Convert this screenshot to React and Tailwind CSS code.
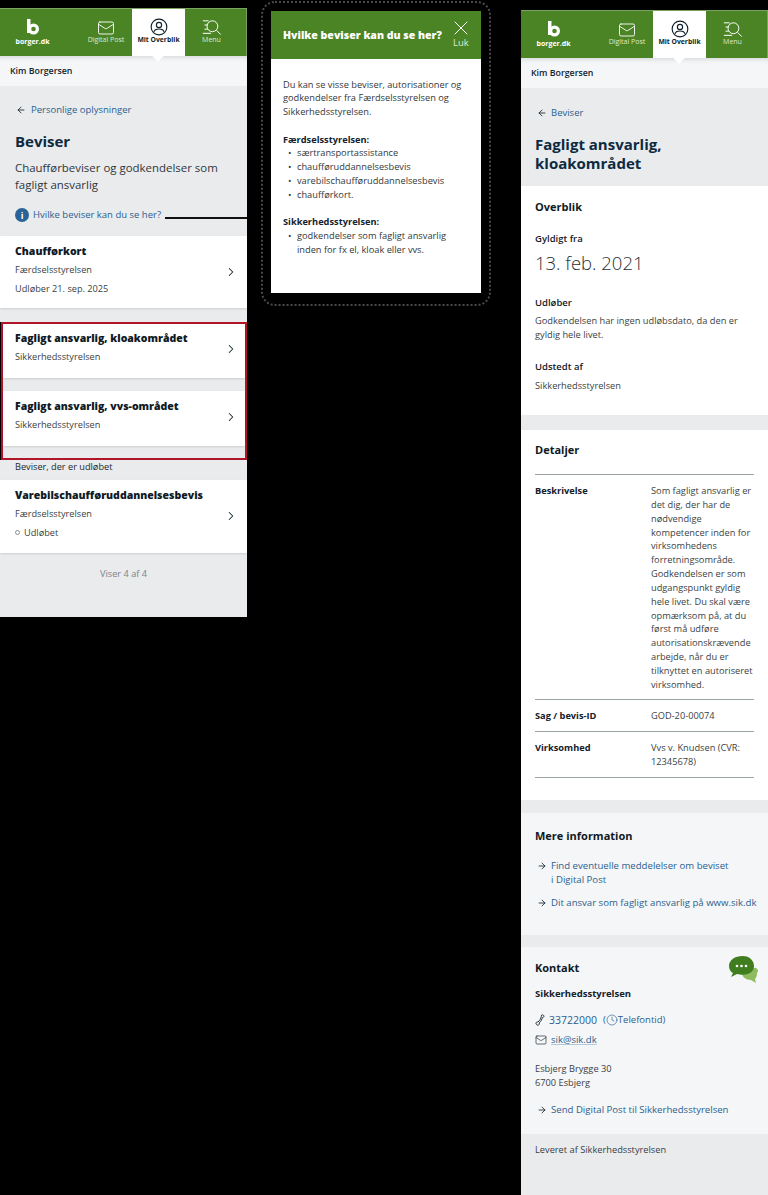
import { ArrowLeft, ArrowRight, ChevronRight, X, Mail, Clock } from 'lucide-react';

function LogoMark() {
  return (
    <svg width="12" height="16" viewBox="0 0 12 16" fill="none">
      <path d="M1.750 0v14" stroke="white" strokeWidth="3.500" />
      <circle cx="6.500" cy="10" r="3.900" stroke="white" strokeWidth="3.200" />
    </svg>
  );
}

function MenuSearchIcon() {
  return (
    <svg width="20" height="17" viewBox="0 0 24 20" fill="none" stroke="white" strokeWidth="1.2">
      <path d="M1 2h7M3 7h4M3 12h4M1 17h10" />
      <circle cx="12.5" cy="8.5" r="6.5" />
      <path d="M17.5 13.5l5 5" />
    </svg>
  );
}

function UserCircleIcon() {
  return (
    <svg width="18" height="18" viewBox="0 0 22 22" fill="none" stroke="#0f1f2b" strokeWidth="1.4">
      <circle cx="11" cy="11" r="9.6" />
      <circle cx="11" cy="8.6" r="3.2" />
      <path d="M4.8 17c.6-2.6 2.4-3.6 6.2-3.6s5.600 1 6.200 3.600" />
    </svg>
  );
}

function HandsetIcon() {
  return (
    <svg width="10" height="12" viewBox="0 0 10 12" fill="none" stroke="#12232f" strokeWidth="0.9" className="mr-[4px]">
      <path d="M6.500 1.200c.8-.6 1.900-.3 2.300.5.300.6.100 1.300-.5 1.600l-.9.300c-.4 1.600-1.600 4-3.200 5.300l.2 1c-.1.800-1 1.300-1.900 1.200C1.500 10.900.8 10 1 9c.2-.8 1-1.200 1.900-1 1.800-1.200 3-3.600 3.400-5.400z" />
    </svg>
  );
}

function Header() {
  return (
    <div className="flex h-[48px] bg-[#4b8425] border-t border-t-[#7ba35f] border-r border-r-[#7ba35f]">
      <div className="flex w-[63px] ml-[1px] flex-col items-center pt-[10px] text-white">
        <LogoMark />
        <span className="mt-[2px] text-[7px] leading-[9px] font-bold">borger.dk</span>
      </div>
      <div className="flex w-[68px] flex-col items-center pl-[16px] pt-[10px] text-[#dfeacf]">
        <Mail size={18} strokeWidth={1.2} color="white" />
        <span className="-mt-[2px] whitespace-nowrap text-[7px] leading-[9px]">Digital Post</span>
      </div>
      <div className="relative flex w-[53px] flex-col items-center bg-white pt-[9px]">
        <UserCircleIcon />
        <span className="relative z-10 -mt-[1px] whitespace-nowrap text-[6.8px] leading-[9px] font-bold text-[#0f1f2b]">Mit Overblik</span>
        <div className="absolute -bottom-[4px] left-[22px] h-[8px] w-[8px] rotate-45 bg-white" />
      </div>
      <div className="flex flex-1 flex-col items-center pr-[8px] pt-[10px] text-[#dfeacf]">
        <MenuSearchIcon />
        <span className="-mt-[1px] text-[7px] leading-[9px]">Menu</span>
      </div>
    </div>
  );
}

function NameBar() {
  return (
    <div className="h-[30px] bg-[#f5f6f7] pl-[10px] pt-[8px] text-[8.8px] leading-[14px] font-semibold text-[#12232f] shadow-[inset_0_5px_5px_-4px_rgba(0,0,0,0.15)]">
      Kim Borgersen
    </div>
  );
}

function CardRow({ title, sub, extra, dot, height, arrowClass, padClass = 'pl-[15px] pt-[7px]' }) {
  return (
    <div className={`relative bg-white shadow-[0_1px_2px_rgba(0,0,0,0.12)] ${padClass} ${height}`}>
      <div className="text-[10.5px] leading-[16px] font-extrabold text-[#0f1a24]">{title}</div>
      <div className="mt-[4px] text-[9.2px] leading-[14px] text-[#3a3f44]">{sub}</div>
      {extra && (
        <div className="mt-[4.500px] flex items-center text-[9.2px] leading-[14px] text-[#3a3f44]">
          {dot && <span className="mr-[4px] h-[5px] w-[5px] rounded-full border border-[#8a8f93]" />}
          {extra}
        </div>
      )}
      <ChevronRight size={14} strokeWidth={1.8} color="#1a2730" className={`absolute ${arrowClass}`} />
    </div>
  );
}

function LeftScreen() {
  return (
    <div className="mt-[8px] w-[247px] shrink-0">
      <Header />
      <NameBar />
      <div className="relative h-[149px] bg-[#e9ebed] px-[15px] pt-[17px]">
        <div className="flex items-center text-[#2b5f8e]">
          <ArrowLeft size={10} strokeWidth={2} color="#12232f" className="ml-[1px] mr-[5px]" />
          <span className="text-[9.5px] leading-[14px] font-medium">Personlige oplysninger</span>
        </div>
        <h1 className="mt-[13px] text-[15px] leading-[22px] font-bold text-[#0d2a3f]">Beviser</h1>
        <p className="mt-[7px] text-[11.45px] leading-[17px] text-[#30363b]">Chaufførbeviser og godkendelser som fagligt ansvarlig</p>
        <div className="mt-[15px] flex items-center">
          <span className="mr-[4px] flex h-[14px] w-[14px] items-center justify-center rounded-full bg-[#2a6398] text-[9px] leading-none font-bold text-white">i</span>
          <span className="text-[9.5px] leading-[14px] font-medium text-[#2b5f8e]">Hvilke beviser kan du se her?</span>
        </div>
        <div className="absolute left-[165px] top-[131px] h-[1.500px] w-[82px] bg-[#111]" />
      </div>
      <div className="bg-[#e9ebed] pt-[1px]">
        <CardRow title="Chaufførkort" sub="Færdselsstyrelsen" extra="Udløber 21. sep. 2025" height="h-[72px]" arrowClass="right-[9px] top-[29px]" />
      </div>
      <div className="h-[14px] bg-[#e9ebed]" />
      <div className="border-2 border-[#b2142a] bg-[#e9ebed] ml-[1px] h-[138px]">
        <CardRow title="Fagligt ansvarlig, kloakområdet" sub="Sikkerhedsstyrelsen" height="h-[54px]" padClass="pl-[12px] pt-[6px]" arrowClass="right-[7px] top-[18px]" />
        <div className="h-[13px]" />
        <CardRow title="Fagligt ansvarlig, vvs-området" sub="Sikkerhedsstyrelsen" height="h-[55px]" padClass="pl-[12px] pt-[7px]" arrowClass="right-[7px] top-[19px]" />
      </div>
      <div className="h-[20px] bg-[#e9ebed] pl-[15px] text-[9.2px] leading-[14px] text-[#23282c]">Beviser, der er udløbet</div>
      <CardRow title="Varebilschaufføruddannelsesbevis" sub="Færdselsstyrelsen" extra="Udløbet" dot height="h-[73px]" arrowClass="right-[9px] top-[29px]" />
      <div className="h-[64px] bg-[#e9ebed] pt-[14px] text-center text-[9.2px] leading-[14px] text-[#7d8388]">Viser 4 af 4</div>
    </div>
  );
}

function Modal() {
  return (
    <div className="ml-[14px] mt-[1px] h-[305px] w-[230px] shrink-0 rounded-[14px] border-2 border-dotted border-[#4a4a4a] px-[8px] pt-[8px]">
      <div className="h-[282px] bg-white">
        <div className="flex h-[48px] bg-[#4b8425] pl-[12px] text-white">
          <div className="flex-1 pt-[16px] text-[10.55px] leading-[16px] font-extrabold whitespace-nowrap">Hvilke beviser kan du se her?</div>
          <div className="flex w-[40px] flex-col items-center pr-[1px] pt-[5px]">
            <X size={24} strokeWidth={1} color="white" />
            <span className="-mt-[3px] text-[9.5px] leading-[12px] text-[#dfeacf]">Luk</span>
          </div>
        </div>
        <div className="px-[12px] pt-[18.500px] text-[9.25px] leading-[13.750px] text-[#33383c]">
          <p>Du kan se visse beviser, autorisationer og godkendelser fra Færdselsstyrelsen og Sikkerhedsstyrelsen.</p>
          <p className="mt-[13.750px] font-bold text-[#14232e]">Færdselsstyrelsen:</p>
          <ul className="pl-[14px]">
            {['særtransportassistance', 'chaufføruddannelsesbevis', 'varebilschaufføruddannelsesbevis', 'chaufførkort.'].map((t) => (
              <li key={t} className="relative">
                <span className="absolute -left-[9px] top-0">•</span>
                {t}
              </li>
            ))}
          </ul>
          <p className="mt-[13.750px] font-bold text-[#14232e]">Sikkerhedsstyrelsen:</p>
          <ul className="pl-[14px]">
            <li className="relative">
              <span className="absolute -left-[9px] top-0">•</span>
              godkendelser som fagligt ansvarlig inden for fx el, kloak eller vvs.
            </li>
          </ul>
        </div>
      </div>
    </div>
  );
}

function DetailRow({ label, children, className }) {
  return (
    <div className={`flex border-b border-[#9aa2a6] ${className}`}>
      <div className="w-[116px] shrink-0 text-[9.25px] leading-[13.850px] font-bold text-[#14202a]">{label}</div>
      <div className="text-[9.25px] leading-[13.850px] text-[#3a3f44]">{children}</div>
    </div>
  );
}

function LinkRow({ children, className }) {
  return (
    <div className={`flex text-[9.6px] leading-[13.800px] font-medium text-[#2b5f8e] ${className}`}>
      <ArrowRight size={10} strokeWidth={2} color="#12232f" className="ml-[2px] mr-[4px] mt-[2px] shrink-0" />
      <span>{children}</span>
    </div>
  );
}

function ChatBubble() {
  return (
    <svg className="absolute right-[10px] top-[9px]" width="29" height="28" viewBox="0 0 29 28">
      <path d="M14 12h11a3 3 0 0 1 3 5c0 3-1 5-2 6l1 4-5-3c-5 0-9-3-9-7z" fill="#8dbb5e" />
      <path d="M13.500 0C6 0 0 4 0 10c0 3 1.500 6 4 7l-2 4 6-3c2 .5 4 .7 5.500.7C21 18.700 25 15 25 10S21 0 13.500 0z" fill="#3f7d1f" />
      <circle cx="8" cy="10" r="1.300" fill="white" />
      <circle cx="12.500" cy="10" r="1.300" fill="white" />
      <circle cx="17" cy="10" r="1.300" fill="white" />
    </svg>
  );
}

function RightScreen() {
  return (
    <div className="ml-[30px] mt-[10px] w-[247px] shrink-0">
      <Header />
      <NameBar />
      <div className="h-[98px] bg-[#e9ebed] px-[14px] pt-[18px]">
        <div className="flex items-center">
          <ArrowLeft size={10} strokeWidth={2} color="#12232f" className="ml-[2px] mr-[4px]" />
          <span className="text-[9.5px] leading-[14px] font-medium text-[#2b5f8e]">Beviser</span>
        </div>
        <h1 className="mt-[14.500px] text-[15px] leading-[19px] font-bold text-[#0d2a3f]">Fagligt ansvarlig, kloakområdet</h1>
      </div>
      <div className="h-[229px] bg-white px-[14px] pt-[13px] shadow-[0_1px_2px_rgba(0,0,0,0.15)]">
        <h2 className="text-[11px] leading-[16px] font-bold text-[#0f1a24]">Overblik</h2>
        <div className="mt-[17px] text-[9.5px] leading-[14px] font-semibold text-[#14202a]">Gyldigt fra</div>
        <div className="mt-[3px] text-[18.500px] leading-[28px] font-light text-[#2a2f33]">13. feb. 2021</div>
        <div className="mt-[19px] text-[9.5px] leading-[14px] font-semibold text-[#14202a]">Udløber</div>
        <p className="mt-[4px] text-[9.25px] leading-[14px] text-[#3a3f44]">Godkendelsen har ingen udløbsdato, da den er gyldig hele livet.</p>
        <div className="mt-[18px] text-[9.5px] leading-[14px] font-semibold text-[#14202a]">Udstedt af</div>
        <p className="mt-[5px] text-[9.25px] leading-[14px] text-[#3a3f44]">Sikkerhedsstyrelsen</p>
      </div>
      <div className="h-[15px] bg-[#e9ebed]" />
      <div className="h-[370px] bg-white px-[14px] pt-[12px] shadow-[0_1px_2px_rgba(0,0,0,0.15)]">
        <h2 className="text-[11px] leading-[16px] font-bold text-[#0f1a24]">Detaljer</h2>
        <div className="mt-[16px] border-t border-[#9aa2a6]" />
        <DetailRow label="Beskrivelse" className="h-[225px] pt-[9px]">
          Som fagligt ansvarlig er det dig, der har de nødvendige kompetencer inden for virksomhedens forretningsområde. Godkendelsen er som udgangspunkt gyldig hele livet. Du skal være opmærksom på, at du først må udføre autorisationskrævende arbejde, når du er tilknyttet en autoriseret virksomhed.
        </DetailRow>
        <DetailRow label="Sag / bevis-ID" className="h-[32px] pt-[9px]">GOD-20-00074</DetailRow>
        <DetailRow label="Virksomhed" className="h-[46px] pt-[9px]">Vvs v. Knudsen (CVR: 12345678)</DetailRow>
      </div>
      <div className="h-[13px] bg-[#e9ebed]" />
      <div className="h-[122px] bg-[#f5f6f8] px-[14px] pt-[15px]">
        <h2 className="text-[11px] leading-[16px] font-bold text-[#0f1a24]">Mere information</h2>
        <LinkRow className="mt-[15px]">
          Find eventuelle meddelelser om beviset
          <br />i Digital Post
        </LinkRow>
        <LinkRow className="mt-[9px] whitespace-nowrap">Dit ansvar som fagligt ansvarlig på www.sik.dk</LinkRow>
      </div>
      <div className="h-[12px] bg-[#e9ebed]" />
      <div className="relative h-[187px] bg-[#f5f6f8] px-[14px] pt-[13px]">
        <h2 className="text-[11px] leading-[16px] font-bold text-[#0f1a24]">Kontakt</h2>
        <ChatBubble />
        <div className="mt-[11px] text-[9.5px] leading-[14px] font-bold text-[#14202a]">Sikkerhedsstyrelsen</div>
        <div className="mt-[11px] flex items-center text-[#2b5f8e]">
          <HandsetIcon />
          <span className="text-[10.5px] leading-[16px] font-medium">33722000</span>
          <span className="ml-[6px] flex items-center text-[9.5px] leading-[14px] font-medium">
            (<Clock size={12} strokeWidth={1.3} color="#2b5f8e" />Telefontid)
          </span>
        </div>
        <div className="mt-[5px] flex items-center">
          <Mail size={12} strokeWidth={1.3} color="#12232f" className="mr-[4px]" />
          <span className="text-[9.5px] leading-[14px] font-medium text-[#2b5f8e] underline decoration-[#b4c8d8]">sik@sik.dk</span>
        </div>
        <p className="mt-[15px] text-[9.25px] leading-[14px] text-[#3a3f44]">
          Esbjerg Brygge 30
          <br />
          6700 Esbjerg
        </p>
        <LinkRow className="mt-[13px]">Send Digital Post til Sikkerhedsstyrelsen</LinkRow>
      </div>
      <div className="h-[61px] bg-[#e9ebed] pl-[14px] pt-[9px] text-[9.25px] leading-[14px] text-[#3a3f44]">Leveret af Sikkerhedsstyrelsen</div>
    </div>
  );
}

export default function App() {
  return (
    <div className="flex h-[1195px] w-[768px] items-start overflow-hidden bg-black font-['Open_Sans',sans-serif]">
      <LeftScreen />
      <Modal />
      <RightScreen />
    </div>
  );
}
